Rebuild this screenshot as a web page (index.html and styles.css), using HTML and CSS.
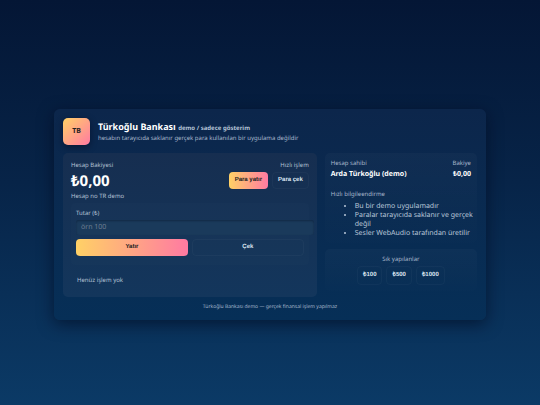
FILE: index.html
```html
<!DOCTYPE html>
<html lang="tr">
<head>
<meta charset="utf-8">
<meta name="viewport" content="width=device-width, initial-scale=1">
<title>Türkoğlu Bankası</title>
<link rel="stylesheet" href="styles.css">
</head>
<body>
<main class="app">
  <header class="header">
    <div class="logo">TB</div>
    <div>
      <h1 class="title">Türkoğlu Bankası <small class="tag">demo / sadece gösterim</small></h1>
      <p class="muted">hesabın tarayıcıda saklanır gerçek para kullanılan bir uygulama değildir</p>
    </div>
  </header>
  <div class="columns">
    <section class="account">
      <div class="row">
        <div>
          <div class="label">Hesap Bakiyesi</div>
          <div class="balance">₺0,00</div>
          <div class="label">Hesap no TR demo</div>
        </div>
        <div class="quick">
          <div class="label">Hızlı işlem</div>
          <div class="buttons">
            <button class="btn primary" type="button">Para yatır</button>
            <button class="btn" type="button">Para çek</button>
          </div>
        </div>
      </div>
      <form class="form">
        <label class="label" for="amount">Tutar (₺)</label>
        <input class="amount" id="amount" type="text" placeholder="örn 100">
        <div class="buttons wide">
          <button class="btn primary" type="button">Yatır</button>
          <button class="btn" type="button">Çek</button>
        </div>
      </form>
      <p class="history">Henüz işlem yok</p>
    </section>
    <aside class="side">
      <section class="card">
        <div class="row">
          <div>
            <div class="muted">Hesap sahibi</div>
            <div class="strong">Arda Türkoğlu (demo)</div>
          </div>
          <div class="end">
            <div class="muted">Bakiye</div>
            <div class="strong">₺0,00</div>
          </div>
        </div>
        <h2 class="muted info-title">Hızlı bilgileendirme</h2>
        <ul class="info">
          <li>Bu bir demo uygulamadır</li>
          <li>Paralar tarayıcıda saklanır ve gerçek değil</li>
          <li>Sesler WebAudio tarafından üretilir</li>
        </ul>
      </section>
      <section class="card common">
        <h2 class="muted">Sık yapılanlar</h2>
        <div class="buttons">
          <button class="btn" type="button">₺100</button>
          <button class="btn" type="button">₺500</button>
          <button class="btn" type="button">₺1000</button>
        </div>
      </section>
    </aside>
  </div>
  <footer class="footer">Türkoğlu Bankası demo — gerçek finansal işlem yapılmaz</footer>
</main>
</body>
</html>
```
FILE: styles.css
```css
* { box-sizing: border-box; }

body {
  margin: 0;
  min-height: 100vh;
  display: flex;
  align-items: center;
  justify-content: center;
  padding-top: 24px;
  background: linear-gradient(180deg, #041635 0%, #072448 45%, #0b3a66 100%);
  color: #fff;
  font: 7px/9px "Noto Sans", sans-serif;
  text-rendering: geometricPrecision;
}

h1, h2, p { margin: 0; font-weight: 400; }

.app {
  width: 80%;
  padding: 9px;
  border-radius: 6px;
  background: linear-gradient(180deg, #0c264b, #062f57);
  box-shadow: 0 4px 16px rgba(1, 8, 28, 0.6);
}

.header {
  display: flex;
  align-items: center;
  gap: 8px;
  margin-bottom: 8px;
}

.logo {
  display: grid;
  place-items: center;
  width: 27px;
  height: 27px;
  border-radius: 5px;
  background: linear-gradient(135deg, #ffd166, #ff7aa2);
  box-shadow: 0 2px 6px rgba(1, 8, 28, 0.5);
  color: #222;
  font-weight: 700;
}

.title { font-size: 9px; line-height: 11px; font-weight: 700; }
.tag { color: #b4c3d6; font-size: 6px; }

.muted { color: #a9b9cd; font-size: 6px; line-height: 8px; }
.label { display: block; color: #b4c2d4; font-size: 6px; line-height: 8px; }

.columns {
  display: grid;
  grid-template-columns: minmax(0, 5fr) minmax(0, 3fr);
  gap: 8px;
}

.account {
  padding: 8px;
  border-radius: 5px;
  background: linear-gradient(180deg, #162e50, #13365c);
}

.row {
  display: flex;
  justify-content: space-between;
}

.balance {
  margin: 4px 0 3px;
  font-size: 15px;
  line-height: 16px;
  font-weight: 700;
}

.quick { text-align: right; }
.quick .buttons { margin-top: 3px; }

.buttons { display: flex; gap: 4px; }

.btn {
  padding: 4px 5px;
  border: 1px solid rgba(255, 255, 255, 0.03);
  border-radius: 4px;
  background: transparent;
  color: #dce6f2;
  font: 700 6px/7px "Liberation Sans", sans-serif;
  text-rendering: inherit;
}

.primary {
  border-color: transparent;
  background: linear-gradient(90deg, #ffd166, #ff7aa2) border-box;
  color: #222;
}

.form {
  margin-top: 3px;
  padding: 6px 5px 9px;
  border-radius: 4px;
  background: rgba(255, 255, 255, 0.01);
}

.amount {
  display: block;
  width: calc(100% + 10px);
  margin: 3px 0 4px;
  padding: 3px 5px;
  border: 0;
  border-radius: 3px;
  background: #1a3a5b;
  box-shadow: inset 0 1px 2px rgba(0, 10, 30, 0.35);
  color: #fff;
  font: 7px/9px "Noto Sans", sans-serif;
  text-rendering: inherit;
}

.amount::placeholder { color: #6f7f92; opacity: 1; }

.wide .btn { flex: 1; }

.history {
  margin: 11px 6px 5px;
  color: #b4c3d6;
  font-size: 6px;
  line-height: 8px;
}

.side {
  display: flex;
  flex-direction: column;
  gap: 6px;
}

.card {
  padding: 6px;
  border-radius: 5px;
  background: linear-gradient(180deg, rgba(255, 255, 255, 0.025), rgba(255, 255, 255, 0.005));
}

.strong { margin-top: 3px; font-weight: 700; }
.end { text-align: right; }
.info-title { margin-top: 11px; }

.info {
  margin: 4px -5px -1px 0;
  padding-left: 24px;
  color: #b9c7d9;
}

.common { text-align: center; }
.common .buttons { justify-content: center; margin-top: 3px; }
.common .btn { padding-block: 5px; }

.footer {
  margin-top: 6px;
  color: #a5b7cc;
  font-size: 5px;
  line-height: 8px;
  text-align: center;
}
```
